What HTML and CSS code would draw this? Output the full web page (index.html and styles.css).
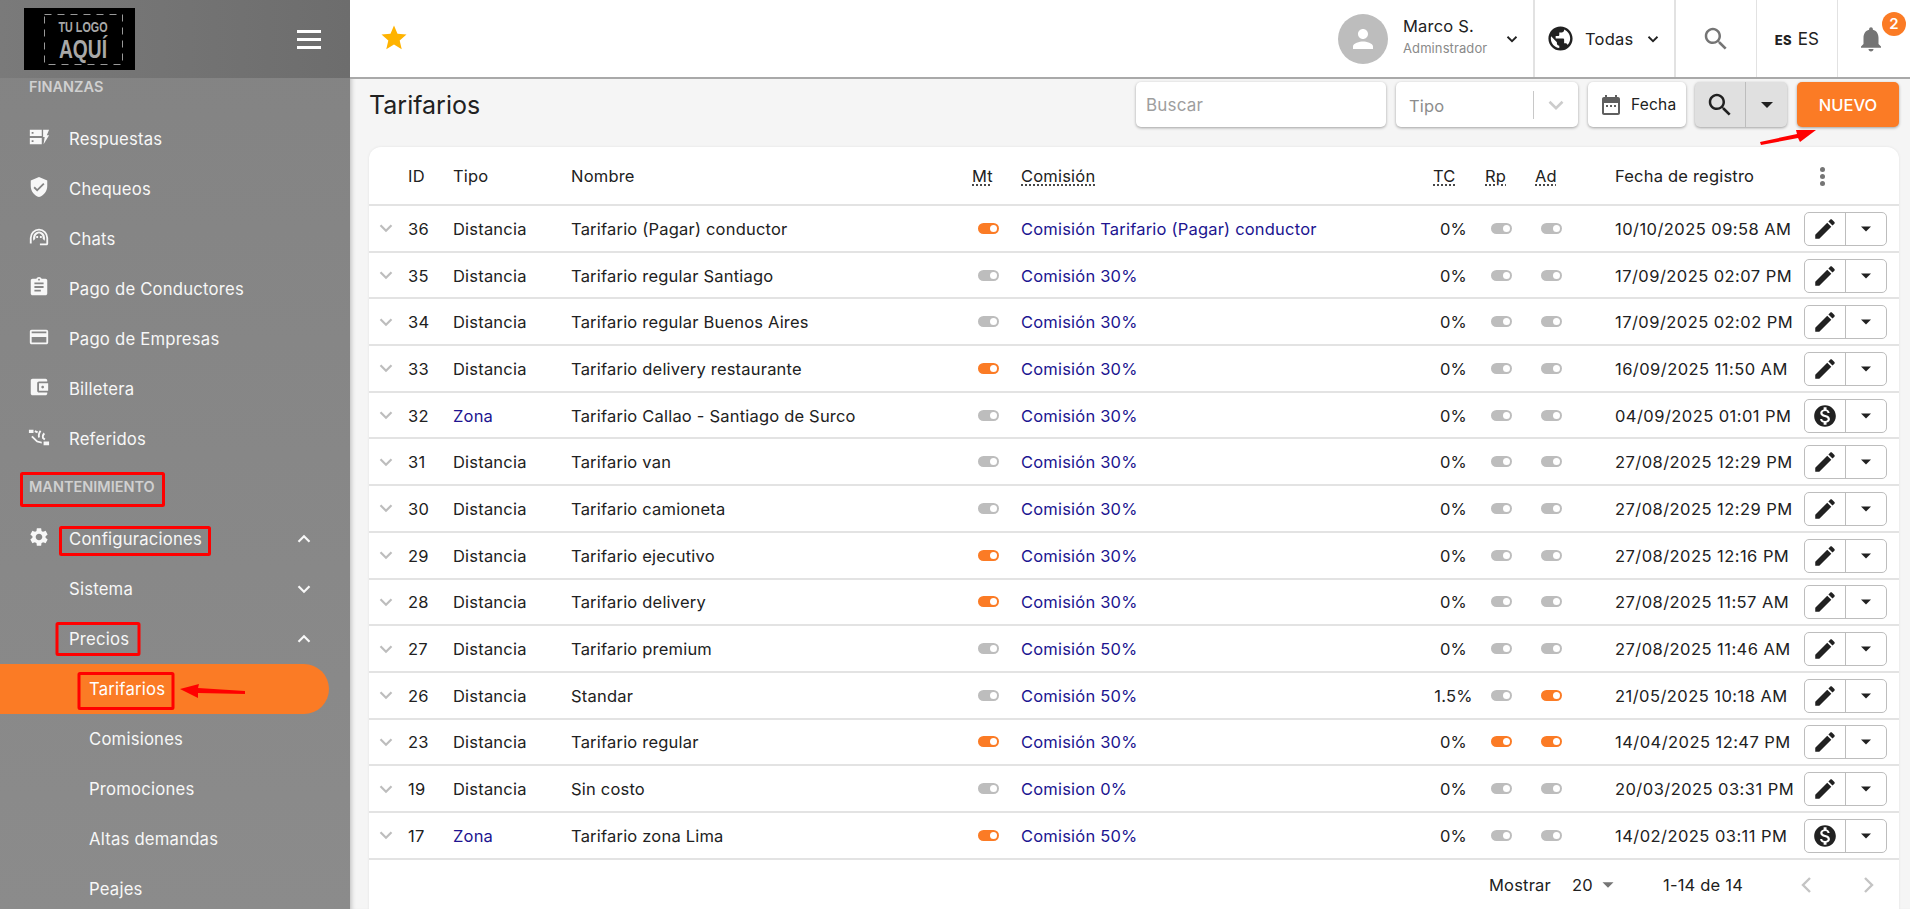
FILE: index.html
```html
<!DOCTYPE html>
<html lang="es">
<head>
	<meta name="viewport" content="width=device-width, initial-scale=1.0">
	<title>Tarifarios</title>
	<link rel="stylesheet" href="styles.css">
</head>
<body>
<!-- shared icons -->
<svg class="iconDefs" aria-hidden="true">
	<symbol id="i-flash" viewBox="0 0 24 24"><path d="M2 4h13v7H2zM4 6.500v2h2v-2zM2 13h13v7H2zM4 15.500v2h2v-2zM16.500 4H23l-2.500 6H23l-6 10 1.200-8h-1.700z" fill-rule="evenodd"/></symbol>
	<symbol id="i-shield" viewBox="0 0 24 24"><path d="M12 1L3 5v6c0 5.550 3.840 10.740 9 12 5.160-1.260 9-6.450 9-12V5l-9-4zm-2 16l-4-4 1.410-1.410L10 14.170l6.590-6.590L18 9l-8 8z"/></symbol>
	<symbol id="i-agent" viewBox="0 0 24 24"><path d="M2 19v-6a10 10 0 0 1 20 0v6c0 1.500-1 2-2 2h-7v-2h7v-6a8 8 0 0 0-16 0v6zM12 6a7 7 0 0 0-6.500 6.500A7 7 0 0 0 6 16l2-2a5 5 0 0 1 4-6 5 5 0 0 1 4 6l2 2a7 7 0 0 0 .5-3.500A7 7 0 0 0 12 6zM9 11h2v2H9zM13 11h2v2h-2z"/></symbol>
	<symbol id="i-clip" viewBox="0 0 24 24"><path d="M19 3h-4.180C14.400 1.840 13.300 1 12 1c-1.300 0-2.400.84-2.820 2H5c-1.100 0-2 .9-2 2v14c0 1.100.9 2 2 2h14c1.100 0 2-.9 2-2V5c0-1.100-.9-2-2-2zm-7 0c.55 0 1 .45 1 1s-.45 1-1 1-1-.45-1-1 .45-1 1-1zm2 14H7v-2h7v2zm3-4H7v-2h10v2zm0-4H7V7h10v2z"/></symbol>
	<symbol id="i-card" viewBox="0 0 24 24"><path d="M20 4H4c-1.110 0-1.990.89-1.990 2L2 18c0 1.110.89 2 2 2h16c1.110 0 2-.89 2-2V6c0-1.110-.89-2-2-2zm0 14H4v-6h16v6zm0-10H4V6h16v2z"/></symbol>
	<symbol id="i-wallet" viewBox="0 0 24 24"><path d="M21 18v1c0 1.100-.9 2-2 2H5c-1.110 0-2-.9-2-2V5c0-1.100.89-2 2-2h14c1.100 0 2 .9 2 2v1h-9c-1.110 0-2 .9-2 2v8c0 1.100.89 2 2 2h9zm-9-2h10V8H12v8zm4-2.500c-.83 0-1.500-.67-1.500-1.500s.67-1.500 1.500-1.500 1.500.67 1.500 1.500-.67 1.500-1.500 1.500z"/></symbol>
	<symbol id="i-refer" viewBox="0 0 24 24"><path d="M1 4h5v3.500H1zM8 4.500l3 1.500-1 2-3-1.500zM17 17h6v4h-6zM14.500 6c-1.500 1.800-2 4-1.500 6.200l-2 .5c-.6-3 .1-5.800 2-8zM18.500 9c-1 .9-1.500 2.200-1.200 3.500l1.700 1.500-1.300 1.500-2.300-2c-.6-2.500 0-4.800 1.800-6.300zM5 10.500l5.500 5.500 4.500 1.200v2l-5.500-1.500L3.500 12z"/></symbol>
	<symbol id="i-gear" viewBox="0 0 24 24"><path d="M19.140 12.940c.04-.3.06-.61.06-.94 0-.32-.02-.64-.07-.94l2.030-1.580c.18-.14.23-.41.12-.61l-1.920-3.320c-.12-.22-.37-.29-.59-.22l-2.390.96c-.5-.38-1.030-.7-1.620-.94l-.36-2.540c-.04-.24-.24-.41-.48-.41h-3.840c-.24 0-.43.17-.47.41l-.36 2.540c-.59.24-1.130.57-1.620.94l-2.390-.96c-.22-.08-.47 0-.59.22L2.740 8.870c-.12.21-.08.47.12.61l2.030 1.580c-.05.3-.09.63-.09.94s.02.64.07.94l-2.030 1.580c-.18.14-.23.41-.12.61l1.920 3.320c.12.22.37.29.59.22l2.390-.96c.5.38 1.030.7 1.620.94l.36 2.540c.05.24.24.41.48.41h3.840c.24 0 .44-.17.47-.41l.36-2.540c.59-.24 1.130-.56 1.620-.94l2.390.96c.22.08.47 0 .59-.22l1.920-3.320c.12-.22.07-.47-.12-.61l-2.010-1.580zM12 15.600c-1.980 0-3.600-1.620-3.600-3.600s1.620-3.600 3.600-3.600 3.600 1.620 3.600 3.600-1.620 3.600-3.600 3.600z"/></symbol>
	<symbol id="i-down" viewBox="0 0 24 24"><path d="M6 9l6 6 6-6" fill="none" stroke="currentColor" stroke-width="2.400"/></symbol>
	<symbol id="i-up" viewBox="0 0 24 24"><path d="M6 15l6-6 6 6" fill="none" stroke="currentColor" stroke-width="2.400"/></symbol>
	<symbol id="i-caret" viewBox="0 0 24 24"><path d="M6 9l6 6 6-6z"/></symbol>
	<symbol id="i-pencil" viewBox="0 0 24 24"><path d="M3 17.250V21h3.750L17.810 9.940l-3.750-3.750L3 17.250zM20.710 7.040c.39-.39.39-1.020 0-1.410l-2.340-2.340c-.39-.39-1.020-.39-1.410 0l-1.830 1.830 3.750 3.750 1.830-1.830z"/></symbol>
	<symbol id="i-money" viewBox="0 0 24 24"><path d="M12 2C6.480 2 2 6.480 2 12s4.480 10 10 10 10-4.480 10-10S17.520 2 12 2zm1.410 16.090V20h-2.670v-1.930c-1.710-.36-3.160-1.460-3.270-3.400h1.960c.1 1.050.82 1.870 2.650 1.870 1.960 0 2.400-.98 2.400-1.590 0-.83-.44-1.610-2.670-2.140-2.480-.6-4.180-1.620-4.180-3.670 0-1.720 1.390-2.840 3.110-3.210V4h2.670v1.950c1.860.45 2.790 1.860 2.850 3.390H14.300c-.05-1.110-.64-1.870-2.220-1.870-1.500 0-2.400.68-2.400 1.640 0 .84.65 1.390 2.670 1.910s4.180 1.390 4.180 3.910c-.01 1.830-1.380 2.830-3.120 3.160z"/></symbol>
	<symbol id="i-search" viewBox="0 0 24 24"><path d="M15.500 14h-.79l-.28-.27C15.410 12.590 16 11.110 16 9.500 16 5.910 13.090 3 9.500 3S3 5.910 3 9.500 5.910 16 9.500 16c1.610 0 3.090-.59 4.230-1.570l.27.28v.79l5 4.990L20.490 19l-4.990-5zm-6 0C7.010 14 5 11.990 5 9.500S7.010 5 9.500 5 14 7.010 14 9.500 11.990 14 9.500 14z"/></symbol>
</svg>

<aside class="sidebar">
	<div class="sideTop">
		<svg class="logo" viewBox="0 0 111 62" role="img">
			<rect width="111" height="62" fill="#000"/>
			<rect x="20.500" y="6.500" width="78" height="50" fill="none" stroke="#999" stroke-dasharray="7 6"/>
			<text x="59" y="24" class="logoSmall" text-anchor="middle" textLength="49" lengthAdjust="spacingAndGlyphs">TU LOGO</text>
			<text x="59" y="50" class="logoBig" text-anchor="middle" textLength="48" lengthAdjust="spacingAndGlyphs">AQUÍ</text>
		</svg>
		<div class="burger"><span></span><span></span><span></span></div>
	</div>
	<nav class="sideNav">
		<div class="sideLabel">FINANZAS</div>
		<a class="sideItem"><svg class="sideIcon"><use href="#i-flash"/></svg>Respuestas</a>
		<a class="sideItem"><svg class="sideIcon"><use href="#i-shield"/></svg>Chequeos</a>
		<a class="sideItem"><svg class="sideIcon"><use href="#i-agent"/></svg>Chats</a>
		<a class="sideItem"><svg class="sideIcon"><use href="#i-clip"/></svg>Pago de Conductores</a>
		<a class="sideItem"><svg class="sideIcon"><use href="#i-card"/></svg>Pago de Empresas</a>
		<a class="sideItem"><svg class="sideIcon"><use href="#i-wallet"/></svg>Billetera</a>
		<a class="sideItem"><svg class="sideIcon"><use href="#i-refer"/></svg>Referidos</a>
		<div class="sideLabel">MANTENIMIENTO</div>
		<a class="sideItem"><svg class="sideIcon"><use href="#i-gear"/></svg>Configuraciones<svg class="sideArrow"><use href="#i-up"/></svg></a>
		<a class="sideItem sub">Sistema<svg class="sideArrow"><use href="#i-down"/></svg></a>
		<a class="sideItem sub">Precios<svg class="sideArrow"><use href="#i-up"/></svg></a>
		<a class="sideItem subTwo active">Tarifarios</a>
		<a class="sideItem subTwo">Comisiones</a>
		<a class="sideItem subTwo">Promociones</a>
		<a class="sideItem subTwo">Altas demandas</a>
		<a class="sideItem subTwo">Peajes</a>
	</nav>
</aside>

<div class="mainHolder">
	<header class="topBar">
		<svg class="star" viewBox="0 0 24 24"><path d="M12 17.270L18.180 21l-1.640-7.030L22 9.240l-7.190-.61L12 2 9.190 8.630 2 9.240l5.460 4.730L5.820 21z"/></svg>
		<div class="topRight">
			<div class="topCell userCell">
				<div class="avatar"><svg viewBox="0 0 24 24"><path d="M12 12c2.210 0 4-1.790 4-4s-1.790-4-4-4-4 1.790-4 4 1.790 4 4 4zm0 2c-2.670 0-8 1.340-8 4v2h16v-2c0-2.660-5.330-4-8-4z"/></svg></div>
				<div class="userText">
					<div class="userName">Marco S.</div>
					<div class="userRole">Adminstrador</div>
				</div>
				<svg class="topArrow"><use href="#i-down"/></svg>
			</div>
			<div class="topCell cityCell">
				<svg class="globe" viewBox="0 0 24 24"><path d="M12 2C6.480 2 2 6.480 2 12s4.480 10 10 10 10-4.480 10-10S17.520 2 12 2zm-1 17.930c-3.950-.49-7-3.850-7-7.930 0-.62.08-1.210.21-1.790L9 15v1c0 1.100.9 2 2 2v1.930zm6.900-2.540c-.26-.81-1-1.390-1.900-1.390h-1v-3c0-.55-.45-1-1-1H8v-2h2c.55 0 1-.45 1-1V7h2c1.100 0 2-.9 2-2v-.41c2.930 1.190 5 4.060 5 7.410 0 2.080-.8 3.970-2.100 5.390z"/></svg>
				<span class="cityName">Todas</span>
				<svg class="topArrow"><use href="#i-down"/></svg>
			</div>
			<div class="topCell thin searchCell"><svg class="topSearch"><use href="#i-search"/></svg></div>
			<div class="topCell thin langCell"><b>ES</b><span>ES</span></div>
			<div class="bellCell">
				<svg class="bell" viewBox="0 0 24 24"><path d="M12 22c1.100 0 2-.9 2-2h-4c0 1.100.89 2 2 2zm6-6v-5c0-3.070-1.640-5.640-4.500-6.320V4c0-.83-.67-1.500-1.500-1.500s-1.500.67-1.500 1.500v.68C7.630 5.360 6 7.920 6 11v5l-2 2v1h16v-1l-2-2z"/></svg>
				<span class="badge">2</span>
			</div>
		</div>
	</header>

	<main class="content">
		<div class="toolBar">
			<h1 class="pageTitle">Tarifarios</h1>
			<div class="filters">
				<div class="field searchField">Buscar</div>
				<div class="field typeField"><span>Tipo</span><i class="typeLine"></i><svg class="typeArrow"><use href="#i-down"/></svg></div>
				<div class="field dateField">
					<svg class="dateIcon" viewBox="0 0 24 24"><path d="M19 4h-1V2h-2v2H8V2H6v2H5c-1.110 0-1.990.9-1.990 2L3 20c0 1.100.89 2 2 2h14c1.100 0 2-.9 2-2V6c0-1.100-.9-2-2-2zm0 16H5V10h14v10zM9 14H7v-2h2v2zm4 0h-2v-2h2v2zm4 0h-2v-2h2v2z"/></svg>
					<span>Fecha</span>
				</div>
				<div class="searchGroup">
					<div class="searchMain"><svg><use href="#i-search"/></svg></div>
					<div class="searchMore"><svg><use href="#i-caret"/></svg></div>
				</div>
				<button class="newButton">NUEVO</button>
			</div>
		</div>

		<section class="tableCard">
			<table class="rates">
				<colgroup>
					<col class="cArrow"><col class="cId"><col class="cType"><col class="cName"><col class="cMt"><col class="cFee"><col class="cTc"><col class="cRp"><col class="cAd"><col class="cDate"><col class="cAct">
				</colgroup>
				<thead>
					<tr>
						<th></th><th>ID</th><th>Tipo</th><th>Nombre</th>
						<th><abbr>Mt</abbr></th><th><abbr>Comisión</abbr></th><th><abbr>TC</abbr></th><th><abbr>Rp</abbr></th><th><abbr>Ad</abbr></th>
						<th>Fecha de registro</th>
						<th class="dotsCell"><span class="dots"><i></i><i></i><i></i></span></th>
					</tr>
				</thead>
				<tbody>
					<tr><td class="expand"><svg><use href="#i-down"/></svg></td><td>36</td><td>Distancia</td><td>Tarifario (Pagar) conductor</td><td class="tog"><i class="toggle on"></i></td><td class="link">Comisión Tarifario (Pagar) conductor</td><td class="pct">0%</td><td class="tog"><i class="toggle"></i></td><td class="tog"><i class="toggle"></i></td><td class="date">10/10/2025 09:58 AM</td><td><div class="actions"><span><svg><use href="#i-pencil"/></svg></span><span><svg class="small"><use href="#i-caret"/></svg></span></div></td></tr>
					<tr><td class="expand"><svg><use href="#i-down"/></svg></td><td>35</td><td>Distancia</td><td>Tarifario regular Santiago</td><td class="tog"><i class="toggle"></i></td><td class="link">Comisión 30%</td><td class="pct">0%</td><td class="tog"><i class="toggle"></i></td><td class="tog"><i class="toggle"></i></td><td class="date">17/09/2025 02:07 PM</td><td><div class="actions"><span><svg><use href="#i-pencil"/></svg></span><span><svg class="small"><use href="#i-caret"/></svg></span></div></td></tr>
					<tr><td class="expand"><svg><use href="#i-down"/></svg></td><td>34</td><td>Distancia</td><td>Tarifario regular Buenos Aires</td><td class="tog"><i class="toggle"></i></td><td class="link">Comisión 30%</td><td class="pct">0%</td><td class="tog"><i class="toggle"></i></td><td class="tog"><i class="toggle"></i></td><td class="date">17/09/2025 02:02 PM</td><td><div class="actions"><span><svg><use href="#i-pencil"/></svg></span><span><svg class="small"><use href="#i-caret"/></svg></span></div></td></tr>
					<tr><td class="expand"><svg><use href="#i-down"/></svg></td><td>33</td><td>Distancia</td><td>Tarifario delivery restaurante</td><td class="tog"><i class="toggle on"></i></td><td class="link">Comisión 30%</td><td class="pct">0%</td><td class="tog"><i class="toggle"></i></td><td class="tog"><i class="toggle"></i></td><td class="date">16/09/2025 11:50 AM</td><td><div class="actions"><span><svg><use href="#i-pencil"/></svg></span><span><svg class="small"><use href="#i-caret"/></svg></span></div></td></tr>
					<tr><td class="expand"><svg><use href="#i-down"/></svg></td><td>32</td><td class="link">Zona</td><td>Tarifario Callao - Santiago de Surco</td><td class="tog"><i class="toggle"></i></td><td class="link">Comisión 30%</td><td class="pct">0%</td><td class="tog"><i class="toggle"></i></td><td class="tog"><i class="toggle"></i></td><td class="date">04/09/2025 01:01 PM</td><td><div class="actions"><span><svg><use href="#i-money"/></svg></span><span><svg class="small"><use href="#i-caret"/></svg></span></div></td></tr>
					<tr><td class="expand"><svg><use href="#i-down"/></svg></td><td>31</td><td>Distancia</td><td>Tarifario van</td><td class="tog"><i class="toggle"></i></td><td class="link">Comisión 30%</td><td class="pct">0%</td><td class="tog"><i class="toggle"></i></td><td class="tog"><i class="toggle"></i></td><td class="date">27/08/2025 12:29 PM</td><td><div class="actions"><span><svg><use href="#i-pencil"/></svg></span><span><svg class="small"><use href="#i-caret"/></svg></span></div></td></tr>
					<tr><td class="expand"><svg><use href="#i-down"/></svg></td><td>30</td><td>Distancia</td><td>Tarifario camioneta</td><td class="tog"><i class="toggle"></i></td><td class="link">Comisión 30%</td><td class="pct">0%</td><td class="tog"><i class="toggle"></i></td><td class="tog"><i class="toggle"></i></td><td class="date">27/08/2025 12:29 PM</td><td><div class="actions"><span><svg><use href="#i-pencil"/></svg></span><span><svg class="small"><use href="#i-caret"/></svg></span></div></td></tr>
					<tr><td class="expand"><svg><use href="#i-down"/></svg></td><td>29</td><td>Distancia</td><td>Tarifario ejecutivo</td><td class="tog"><i class="toggle on"></i></td><td class="link">Comisión 30%</td><td class="pct">0%</td><td class="tog"><i class="toggle"></i></td><td class="tog"><i class="toggle"></i></td><td class="date">27/08/2025 12:16 PM</td><td><div class="actions"><span><svg><use href="#i-pencil"/></svg></span><span><svg class="small"><use href="#i-caret"/></svg></span></div></td></tr>
					<tr><td class="expand"><svg><use href="#i-down"/></svg></td><td>28</td><td>Distancia</td><td>Tarifario delivery</td><td class="tog"><i class="toggle on"></i></td><td class="link">Comisión 30%</td><td class="pct">0%</td><td class="tog"><i class="toggle"></i></td><td class="tog"><i class="toggle"></i></td><td class="date">27/08/2025 11:57 AM</td><td><div class="actions"><span><svg><use href="#i-pencil"/></svg></span><span><svg class="small"><use href="#i-caret"/></svg></span></div></td></tr>
					<tr><td class="expand"><svg><use href="#i-down"/></svg></td><td>27</td><td>Distancia</td><td>Tarifario premium</td><td class="tog"><i class="toggle"></i></td><td class="link">Comisión 50%</td><td class="pct">0%</td><td class="tog"><i class="toggle"></i></td><td class="tog"><i class="toggle"></i></td><td class="date">27/08/2025 11:46 AM</td><td><div class="actions"><span><svg><use href="#i-pencil"/></svg></span><span><svg class="small"><use href="#i-caret"/></svg></span></div></td></tr>
					<tr><td class="expand"><svg><use href="#i-down"/></svg></td><td>26</td><td>Distancia</td><td>Standar</td><td class="tog"><i class="toggle"></i></td><td class="link">Comisión 50%</td><td class="pct">1.5%</td><td class="tog"><i class="toggle"></i></td><td class="tog"><i class="toggle on"></i></td><td class="date">21/05/2025 10:18 AM</td><td><div class="actions"><span><svg><use href="#i-pencil"/></svg></span><span><svg class="small"><use href="#i-caret"/></svg></span></div></td></tr>
					<tr><td class="expand"><svg><use href="#i-down"/></svg></td><td>23</td><td>Distancia</td><td>Tarifario regular</td><td class="tog"><i class="toggle on"></i></td><td class="link">Comisión 30%</td><td class="pct">0%</td><td class="tog"><i class="toggle on"></i></td><td class="tog"><i class="toggle on"></i></td><td class="date">14/04/2025 12:47 PM</td><td><div class="actions"><span><svg><use href="#i-pencil"/></svg></span><span><svg class="small"><use href="#i-caret"/></svg></span></div></td></tr>
					<tr><td class="expand"><svg><use href="#i-down"/></svg></td><td>19</td><td>Distancia</td><td>Sin costo</td><td class="tog"><i class="toggle"></i></td><td class="link">Comision 0%</td><td class="pct">0%</td><td class="tog"><i class="toggle"></i></td><td class="tog"><i class="toggle"></i></td><td class="date">20/03/2025 03:31 PM</td><td><div class="actions"><span><svg><use href="#i-pencil"/></svg></span><span><svg class="small"><use href="#i-caret"/></svg></span></div></td></tr>
					<tr><td class="expand"><svg><use href="#i-down"/></svg></td><td>17</td><td class="link">Zona</td><td>Tarifario zona Lima</td><td class="tog"><i class="toggle on"></i></td><td class="link">Comisión 50%</td><td class="pct">0%</td><td class="tog"><i class="toggle"></i></td><td class="tog"><i class="toggle"></i></td><td class="date">14/02/2025 03:11 PM</td><td><div class="actions"><span><svg><use href="#i-money"/></svg></span><span><svg class="small"><use href="#i-caret"/></svg></span></div></td></tr>
				</tbody>
			</table>
			<div class="pager">
				<span class="pagerShow">Mostrar</span>
				<span class="pagerSize">20<svg><use href="#i-caret"/></svg></span>
				<span class="pagerCount">1-14 de 14</span>
				<svg class="pagerArrow" viewBox="0 0 24 24"><path d="M15 5l-7 7 7 7" fill="none" stroke="currentColor" stroke-width="2.400"/></svg>
				<svg class="pagerArrow" viewBox="0 0 24 24"><path d="M9 5l7 7-7 7" fill="none" stroke="currentColor" stroke-width="2.400"/></svg>
			</div>
		</section>
	</main>
</div>

<!-- red marks drawn on top of the screenshot -->
<svg class="marks" viewBox="0 0 1910 909">
	<rect x="21.500" y="473.500" width="142" height="32" rx="1"/>
	<rect x="60.500" y="527.500" width="149" height="27" rx="1"/>
	<rect x="57" y="623.500" width="82" height="31" rx="1"/>
	<rect x="79" y="673.500" width="94" height="35" rx="1"/>
	<path class="fillMark" d="M180 689l19-5-1 4 47 3v3l-47-1 0 5z"/>
	<path class="fillMark" d="M1816 130l-16 12-2-4-37 7-1-3 37-8-1-4z"/>
</svg>
</body>
</html>
```

FILE: styles.css
```css
html, body {
	margin: 0;
	padding: 0;
	height: 100%;
	overflow: hidden;
}
body {
	display: flex;
	position: relative;
	background: #f5f5f5;
	color: #212121;
	font-family: "Inter", "Liberation Sans", sans-serif;
	font-size: 16.500px;
	letter-spacing: .2px;
}
.iconDefs {
	display: none;
}
svg {
	fill: currentColor;
}

/* sidebar */
.sidebar {
	flex: 0 0 350px;
	height: 909px;
	overflow: hidden;
	background: linear-gradient(#838383, #8b8b8b);
	color: #f7f7f7;
}
.sideTop {
	position: relative;
	z-index: 2;
	display: flex;
	align-items: center;
	justify-content: space-between;
	height: 78px;
	padding: 0 29px 0 24px;
	box-sizing: border-box;
	background: linear-gradient(90deg, #7a7a7a, #6d6d6d);
}
.logo {
	display: block;
	width: 111px;
	height: 62px;
}
.logoSmall {
	fill: #a8a8a8;
	font: bold 15px "Liberation Sans Narrow", "Liberation Sans", sans-serif;
	letter-spacing: 0;
}
.logoBig {
	fill: #a8a8a8;
	font: bold 26px "Liberation Sans Narrow", "Liberation Sans", sans-serif;
	letter-spacing: 0;
}
.burger span {
	display: block;
	width: 24px;
	height: 3px;
	margin: 5px 0;
	background: #fff;
}
.sideNav {
	margin-top: -14px;
}
.sideLabel {
	height: 50px;
	padding: 14px 0 0 29px;
	box-sizing: border-box;
	color: #d0d0d0;
	font-size: 14.500px;
	font-weight: 600;
	letter-spacing: 0;
}
.sideItem {
	display: flex;
	align-items: center;
	height: 50px;
	padding: 0 0 1px 28px;
	box-sizing: border-box;
	font-size: 16.700px;
}
.sideIcon {
	width: 22px;
	height: 22px;
	margin-right: 19px;
	margin-top: -3px;
}
.sideArrow {
	width: 22px;
	height: 22px;
	margin-left: auto;
	margin-right: 35px;
}
.sub {
	padding-left: 69px;
}
.subTwo {
	padding-left: 89px;
}
.active {
	width: 329px;
	background: #fb7b25;
	border-radius: 0 25px 25px 0;
	color: #fff;
}

/* top bar */
.mainHolder {
	flex: 1;
	min-width: 0;
	box-shadow: inset 5px 0 5px -4px rgba(0, 0, 0, .25);
}
.topBar {
	display: flex;
	align-items: center;
	justify-content: space-between;
	height: 79px;
	box-sizing: border-box;
	background: #fff;
	border-bottom: 2px solid #a9a9a9;
}
.star {
	width: 30px;
	height: 30px;
	margin: -2px 0 0 29px;
	color: #ffb300;
}
.topRight {
	display: flex;
	height: 77px;
}
.topCell {
	display: flex;
	align-items: center;
	box-sizing: border-box;
	border-right: 2px solid #e2e2e2;
}
.thin {
	border-right-width: 1px;
	justify-content: center;
}
.userCell {
	width: 199px;
	padding-left: 2px;
}
.avatar {
	display: flex;
	align-items: center;
	justify-content: center;
	width: 50px;
	height: 50px;
	margin-right: 15px;
	border-radius: 50%;
	background: #bdbdbd;
	color: #fff;
}
.avatar svg {
	width: 30px;
	height: 30px;
}
.userText {
	flex: 1;
}
.userName {
	font-size: 16.500px;
	line-height: 20px;
	margin-top: -5px;
}
.userRole {
	margin-top: 4px;
	color: #8a8a8a;
	font-size: 13px;
	letter-spacing: .1px;
	line-height: 16px;
}
.topArrow {
	flex: none;
	width: 18px;
	height: 18px;
	margin-right: 12px;
	margin-left: 10px;
}
.cityCell {
	width: 141px;
	padding-left: 11px;
}
.globe {
	width: 29px;
	height: 29px;
	margin-right: 10px;
}
.cityName {
	flex: 1;
	font-size: 16.500px;
}
.searchCell {
	width: 81px;
}
.topSearch {
	width: 30px;
	height: 30px;
	color: #757575;
}
.langCell {
	width: 81px;
	gap: 6px;
	font-size: 17px;
}
.langCell b {
	font-size: 13px;
	font-weight: 800;
	margin-top: 3px;
}
.bellCell {
	position: relative;
	display: flex;
	align-items: center;
	justify-content: center;
	width: 72px;
}
.bell {
	width: 30px;
	height: 30px;
	margin-right: 6px;
	color: #757575;
}
.badge {
	position: absolute;
	top: 12px;
	left: 44px;
	width: 24px;
	height: 24px;
	border-radius: 50%;
	background: #fb7b25;
	color: #fff;
	font-size: 15px;
	font-weight: 600;
	line-height: 24px;
	text-align: center;
	letter-spacing: 0;
}

/* toolbar */
.content {
	padding: 3px 11px 0 19px;
}
.toolBar {
	display: flex;
	align-items: center;
	justify-content: space-between;
	height: 45px;
}
.pageTitle {
	margin: 0;
	font-size: 25px;
	font-weight: 400;
	letter-spacing: 0;
}
.filters {
	display: flex;
	height: 45px;
}
.field {
	display: flex;
	align-items: center;
	box-sizing: border-box;
	margin-right: 10px;
	background: #fff;
	border-radius: 5px;
	box-shadow: 0 1px 3px rgba(0, 0, 0, .35);
	color: #9e9e9e;
}
.searchField {
	width: 250px;
	padding-left: 10px;
	font-size: 17px;
}
.typeField {
	width: 182px;
	padding-left: 13px;
	color: #8c8c8c;
}
.typeField span {
	width: 124px;
	padding-top: 2px;
}
.typeLine {
	width: 1px;
	height: 28px;
	background: #c8c8c8;
}
.typeArrow {
	width: 26px;
	height: 26px;
	margin-left: 9px;
	color: #ccc;
}
.dateField {
	width: 98px;
	padding-left: 11px;
	margin-right: 9px;
	color: #212121;
}
.dateIcon {
	flex: none;
	width: 24px;
	height: 24px;
	margin-right: 8px;
	color: #5f5f5f;
}
.dateField span {
	font-size: 15.500px;
}
.searchGroup {
	display: flex;
	width: 92px;
	margin-right: 10px;
	background: #e0e0e0;
	border-radius: 5px;
	box-shadow: 0 1px 3px rgba(0, 0, 0, .35);
}
.searchMain {
	display: flex;
	align-items: center;
	justify-content: center;
	width: 51px;
	border-right: 1px solid #bdbdbd;
	box-sizing: border-box;
}
.searchMain svg {
	width: 30px;
	height: 30px;
}
.searchMore {
	display: flex;
	align-items: center;
	justify-content: center;
	flex: 1;
}
.searchMore svg {
	width: 24px;
	height: 24px;
}
.newButton {
	width: 102px;
	padding: 0;
	border: 0;
	border-radius: 5px;
	background: #fb7b25;
	box-shadow: 0 1px 3px rgba(0, 0, 0, .35);
	color: #fff;
	font: 500 16.500px "Inter", "Liberation Sans", sans-serif;
}

/* table */
.tableCard {
	margin-top: 20px;
	background: #fff;
	border-radius: 12px 12px 0 0;
	box-shadow: 0 0 3px rgba(0, 0, 0, .08);
}
.rates {
	width: 1530px;
	table-layout: fixed;
	border-collapse: collapse;
}
.cArrow { width: 31px; }
.cId { width: 45px; }
.cType { width: 118px; }
.cName { width: 401px; }
.cMt { width: 49px; }
.cFee { width: 412px; }
.cTc { width: 52px; }
.cRp { width: 50px; }
.cAd { width: 80px; }
.cDate { width: 189px; }
.cAct { width: 103px; }
.rates th {
	height: 58px;
	padding: 1px 8px 0;
	box-sizing: border-box;
	border-bottom: 2px solid #e3e3e3;
	font-weight: 400;
	text-align: left;
}
.rates td {
	height: 46.700px;
	padding: 1px 8px 0;
	box-sizing: border-box;
	border-bottom: 2px solid #e3e3e3;
	white-space: nowrap;
}
abbr {
	text-decoration: underline dotted;
	text-underline-offset: 3px;
}
.expand {
	color: #bdbdbd;
	text-align: right;
}
.rates .expand {
	padding: 0 3px 0 0;
}
.expand svg {
	display: block;
	width: 22px;
	height: 22px;
	margin-left: auto;
}
.link {
	color: #201490;
}
.rates .date {
	letter-spacing: .45px;
}
.rates .pct {
	padding: 1px 3px 0 8px;
	text-align: center;
}
.rates .tog {
	padding: 0 0 0 14px;
}
.toggle {
	position: relative;
	display: block;
	width: 21px;
	height: 11px;
	border-radius: 6px;
	background: #bdbdbd;
}
.toggle::after {
	content: "";
	position: absolute;
	top: 2px;
	right: 2px;
	width: 7px;
	height: 7px;
	border-radius: 50%;
	background: #fff;
}
.on {
	background: #fb7b25;
}
.dots {
	display: block;
	width: 6px;
	margin-left: 16px;
}
.dots i {
	display: block;
	width: 5px;
	height: 5px;
	margin: 2px 0;
	border-radius: 50%;
	background: #757575;
}
.actions {
	display: flex;
	width: 83px;
	height: 34px;
	box-sizing: border-box;
	border: 1px solid #bdbdbd;
	border-radius: 5px;
}
.actions span {
	display: flex;
	align-items: center;
	justify-content: center;
	flex: 1;
}
.actions span + span {
	border-left: 1px solid #bdbdbd;
}
.actions svg {
	width: 26px;
	height: 26px;
}
.actions svg.small {
	width: 20px;
	height: 20px;
}

/* pagination */
.pager {
	display: flex;
	align-items: center;
	height: 50px;
	padding-left: 1120px;
}
.pagerShow {
	width: 83px;
}
.pagerSize {
	display: flex;
	align-items: center;
	width: 91px;
}
.pagerSize svg {
	width: 22px;
	height: 22px;
	margin-left: 4px;
	color: #757575;
}
.pagerCount {
	width: 132px;
}
.pagerArrow {
	width: 24px;
	height: 24px;
	margin-right: 37px;
	color: #c4c4c4;
}
.pagerArrow:last-child {
	margin-right: 0;
}

/* red marks */
.marks {
	position: absolute;
	top: 0;
	left: 0;
	width: 1910px;
	height: 909px;
	fill: none;
	stroke: #f00;
	stroke-width: 3;
	pointer-events: none;
}
.fillMark {
	fill: #f00;
	stroke: none;
}
```
